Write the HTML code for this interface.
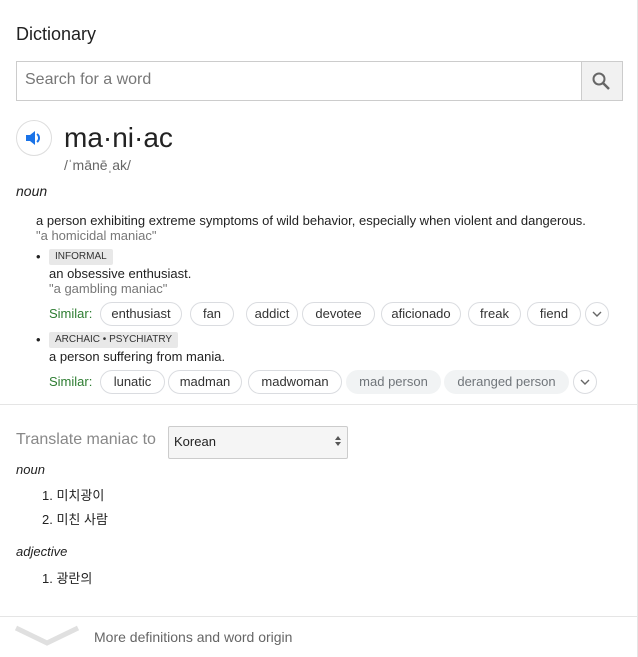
<!DOCTYPE html>
<html><head><meta charset="utf-8"><style>
body{margin:0;width:638px;height:657px;background:#fff;font-family:"Liberation Sans","Noto Sans CJK KR",sans-serif;color:#222;position:relative;overflow:hidden}
.a{position:absolute;white-space:nowrap}
.chip{position:absolute;height:22px;border:1px solid #dadce0;border-radius:12px;font-size:13px;color:#333;text-align:center;line-height:22px;box-sizing:content-box}
.g{background:#f1f3f4;border-color:#f1f3f4;color:#70757a}
.chev{position:absolute;width:22px;height:22px;border:1px solid #dadce0;border-radius:50%}
.tag{position:absolute;background:#e8e8e8;font-size:10px;color:#333;height:16px;line-height:16px;padding:0 6px;border-radius:2px}
.ex{color:#777;font-size:13px}
</style></head><body>
<div style="position:absolute;right:0;top:0;width:1px;height:657px;background:#e5e5e5"></div>
<div class="a" style="left:16px;top:24px;font-size:18px;color:#222">Dictionary</div>
<div style="position:absolute;left:16px;top:61px;width:605px;height:38px;border:1px solid #ccc"></div>
<div class="a" style="left:25px;top:71px;font-size:16px;color:#777">Search for a word</div>
<div style="position:absolute;left:581px;top:62px;width:40px;height:38px;background:#f1f1f1;border-left:1px solid #ccc"></div>
<svg class="a" style="left:591px;top:71px" width="20" height="20" viewBox="0 0 20 20"><circle cx="8" cy="8" r="5.5" fill="none" stroke="#666" stroke-width="2"/><path d="M12 12L18 18" stroke="#666" stroke-width="2.5"/></svg>
<div style="position:absolute;left:16px;top:120px;width:34px;height:34px;border:1px solid #ddd;border-radius:50%"></div>
<svg class="a" style="left:25px;top:129px" width="18" height="18" viewBox="0 0 18 18"><path d="M1 6h4l5-4v14l-5-4H1z" fill="#1a73e8"/><path d="M12 5a5 5 0 0 1 0 8" stroke="#1a73e8" stroke-width="2" fill="none"/></svg>
<div class="a" style="left:64px;top:122px;font-size:28px;color:#222">ma·ni·ac</div>
<div class="a" style="left:64px;top:157px;font-size:14px;color:#666">/ˈmānēˌak/</div>
<div class="a" style="left:16px;top:183px;font-size:14px;font-style:italic">noun</div>
<div class="a" style="left:36px;top:213px;font-size:13px">a person exhibiting extreme symptoms of wild behavior, especially when violent and dangerous.</div>
<div class="a ex" style="left:36px;top:228px">"a homicidal maniac"</div>
<div class="a" style="left:36px;top:249px;font-size:13px">•</div>
<div class="tag" style="left:49px;top:249px">INFORMAL</div>
<div class="a" style="left:49px;top:266px;font-size:13px">an obsessive enthusiast.</div>
<div class="a ex" style="left:49px;top:281px">"a gambling maniac"</div>
<div class="a" style="left:49px;top:306px;font-size:13px;color:#2e7d32">Similar:</div>
<div class="chip" style="left:100px;top:302px;width:80px">enthusiast</div>
<div class="chip" style="left:190px;top:302px;width:42px">fan</div>
<div class="chip" style="left:246px;top:302px;width:50px">addict</div>
<div class="chip" style="left:302px;top:302px;width:71px">devotee</div>
<div class="chip" style="left:381px;top:302px;width:78px">aficionado</div>
<div class="chip" style="left:468px;top:302px;width:51px">freak</div>
<div class="chip" style="left:527px;top:302px;width:52px">fiend</div>
<div class="chev" style="left:585px;top:302px"></div>
<svg class="a" style="left:592px;top:310px" width="10" height="8"><path d="M1 2l4 4 4-4" stroke="#666" stroke-width="1.4" fill="none"/></svg>
<div class="a" style="left:36px;top:332px;font-size:13px">•</div>
<div class="tag" style="left:49px;top:332px">ARCHAIC • PSYCHIATRY</div>
<div class="a" style="left:49px;top:349px;font-size:13px">a person suffering from mania.</div>
<div class="a" style="left:49px;top:374px;font-size:13px;color:#2e7d32">Similar:</div>
<div class="chip" style="left:100px;top:370px;width:63px">lunatic</div>
<div class="chip" style="left:168px;top:370px;width:72px">madman</div>
<div class="chip" style="left:248px;top:370px;width:92px">madwoman</div>
<div class="chip g" style="left:346px;top:370px;width:93px">mad person</div>
<div class="chip g" style="left:444px;top:370px;width:123px">deranged person</div>
<div class="chev" style="left:573px;top:370px"></div>
<svg class="a" style="left:580px;top:378px" width="10" height="8"><path d="M1 2l4 4 4-4" stroke="#666" stroke-width="1.4" fill="none"/></svg>
<div style="position:absolute;left:0;top:404px;width:638px;height:1px;background:#e5e5e5"></div>
<div class="a" style="left:16px;top:431px;font-size:16px;color:#888">Translate maniac to</div>
<div style="position:absolute;left:168px;top:426px;width:178px;height:31px;border:1px solid #ccc;background:#f5f5f5;border-radius:2px"></div>
<div class="a" style="left:174px;top:434px;font-size:13px">Korean</div>
<svg class="a" style="left:334px;top:435px" width="8" height="12"><path d="M1 5l3-4 3 4zM1 7l3 4 3-4z" fill="#555"/></svg>
<div class="a" style="left:16px;top:462px;font-size:13px;font-style:italic">noun</div>
<div class="a" style="left:42px;top:485px;font-size:13px">1. 미치광이</div>
<div class="a" style="left:42px;top:509px;font-size:13px">2. 미친 사람</div>
<div class="a" style="left:16px;top:544px;font-size:13px;font-style:italic">adjective</div>
<div class="a" style="left:42px;top:568px;font-size:13px">1. 광란의</div>
<div style="position:absolute;left:0;top:616px;width:638px;height:1px;background:#e5e5e5"></div>
<svg class="a" style="left:14px;top:624px" width="66" height="24"><path d="M2 4l31 15 31-15" stroke="#e0e0e0" stroke-width="5" fill="none"/></svg>
<div class="a" style="left:94px;top:629px;font-size:14px;color:#666">More definitions and word origin</div>
</body></html>
